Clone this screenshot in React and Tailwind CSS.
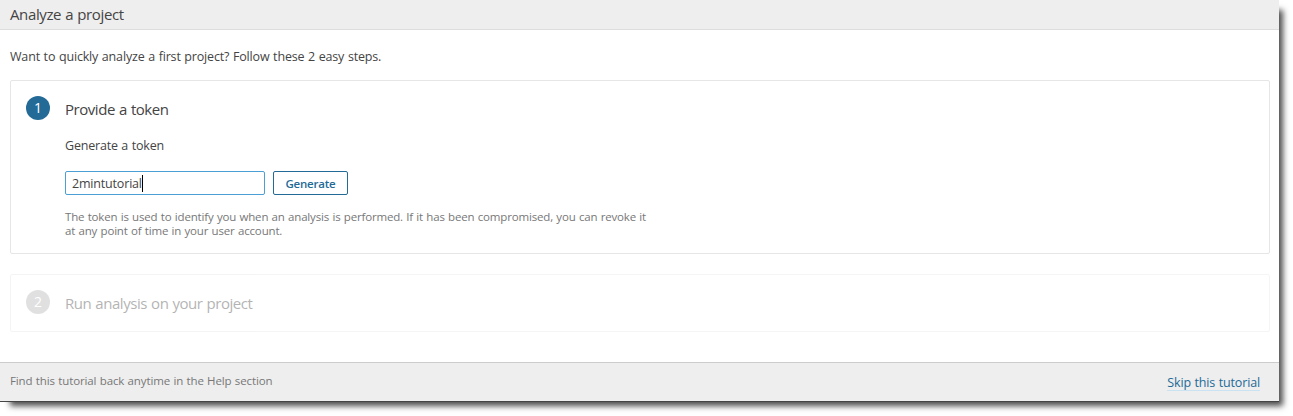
function Step({ number, title, active, children }) {
  return (
    <section
      className={
        active
          ? "flex h-[174px] rounded-[2px] border border-[#e6e6e6] pl-[15px] pt-[15px]"
          : "mt-5 flex h-[58px] rounded-[2px] border border-[#e6e6e6] pl-[15px] pt-[15px] opacity-40"
      }
    >
      <div
        className={
          active
            ? "flex size-6 shrink-0 items-center justify-center rounded-full bg-[#236a97] text-[14px] font-medium leading-6 text-white"
            : "flex size-6 shrink-0 items-center justify-center rounded-full bg-[#b4b4b4] text-[14px] font-medium leading-6 text-white"
        }
      >
        {number}
      </div>
      <div className="ml-[15px]">
        <h2 className="mt-px whitespace-nowrap text-[15px] leading-6 tracking-[-0.45px] text-[#444] [word-spacing:0.6px]">{title}</h2>
        {children}
      </div>
    </section>
  );
}

export default function App() {
  return (
    <div className="h-[416px] w-[1293px] overflow-hidden bg-white font-['Open_Sans','Noto_Sans',sans-serif] text-[#444]">
      <main className="flex h-[402px] w-[1279px] flex-col border-b border-[#444] bg-white shadow-[7px_7px_6px_-3px_rgba(0,0,0,0.7)]">
        <header className="flex h-[30px] items-start border-b border-[#ddd] bg-[#eee] pl-[10px] pt-[2px]">
          <h1 className="whitespace-nowrap text-[15px] leading-6 tracking-[-0.38px] [word-spacing:0.6px]">Analyze a project</h1>
        </header>
        <div className="flex-1 pl-[10px] pr-[9px]">
          <p className="mb-[13px] mt-[17px] whitespace-nowrap text-[12.5px] leading-5 tracking-[-0.17px] [word-spacing:0.6px]">
            Want to quickly analyze a first project? Follow these 2 easy steps.
          </p>
          <Step number="1" title="Provide a token" active>
            <p className="mt-[15px] text-[12.5px] leading-5 tracking-[-0.2px] [word-spacing:0.6px]">Generate a token</p>
            <div className="mt-[15px] flex gap-2">
              <div className="flex h-6 w-[200px] items-center rounded-[2px] border border-[#4b9fd5] pl-[6px] text-[12.5px]">
                <span className="pt-[2px] leading-5 tracking-[-0.18px]">2mintutorial</span>
                <span className="h-[17px] w-px bg-black" />
              </div>
              <button className="flex h-6 w-[75px] items-center justify-center rounded-[2px] border border-[#236a97] pt-px text-[11.5px] font-semibold tracking-[-0.2px] text-[#236a97]">
                Generate
              </button>
            </div>
            <p className="mt-[15px] whitespace-nowrap text-[11.5px] leading-[14px] tracking-[-0.165px] text-[#777] [word-spacing:0.5px]">
              The token is used to identify you when an analysis is performed. If it has been compromised, you can revoke it
              <br />
              at any point of time in your user account.
            </p>
          </Step>
          <Step number="2" title="Run analysis on your project" />
        </div>
        <footer className="flex h-[39px] justify-between border-t border-[#ccc] bg-[#eee] pl-[10px] pr-[19px]">
          <span className="mt-[10px] whitespace-nowrap text-[11.5px] leading-4 tracking-[-0.12px] text-[#777] [word-spacing:0.5px]">
            Find this tutorial back anytime in the Help section
          </span>
          <a className="mt-[12px] h-[16px] whitespace-nowrap border-b border-[#cae3f2] text-[12.5px] leading-4 tracking-[-0.15px] text-[#236a97] [word-spacing:0.5px]">
            Skip this tutorial
          </a>
        </footer>
      </main>
    </div>
  );
}
